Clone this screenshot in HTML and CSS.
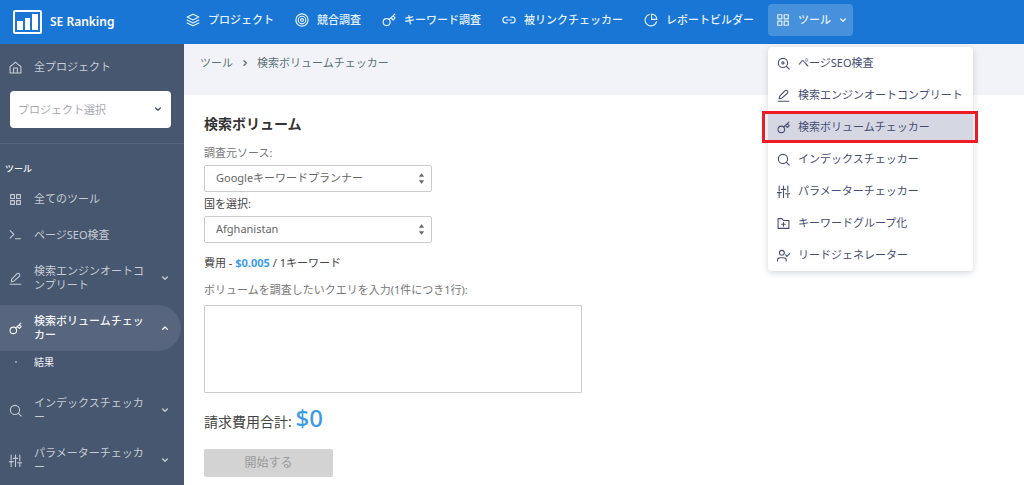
FILE: index.html
```html
<!DOCTYPE html>
<html lang="ja">
<head>
<meta charset="utf-8">
<meta name="viewport" content="width=device-width, initial-scale=1">
<title>検索ボリュームチェッカー - SE Ranking</title>
<link rel="stylesheet" href="styles.css">
</head>
<body>
<svg class="sprite" aria-hidden="true">
  <symbol id="layers" viewBox="0 0 24 24"><path d="M12 2 2 7l10 5 10-5zM2 12l10 5 10-5M2 17l10 5 10-5"/></symbol>
  <symbol id="target" viewBox="0 0 24 24"><circle cx="12" cy="12" r="10.5"/><circle cx="12" cy="12" r="6.5"/><circle cx="12" cy="12" r="2.5"/></symbol>
  <symbol id="key" viewBox="0 0 24 24"><circle cx="8" cy="15.500" r="6"/><path d="M12.500 11 22 2M15.500 8l3.500 4 3.500-3.500L19 5"/></symbol>
  <symbol id="link" viewBox="0 0 24 24"><path d="M9 17H6.500a5 5 0 0 1 0-10H9M15 7h2.500a5 5 0 0 1 0 10H15M8 12h8"/></symbol>
  <symbol id="pie" viewBox="0 0 24 24"><path d="M9 2.500A10 10 0 1 0 21.500 15M13 2v9h9a9 9 0 0 0-9-9z"/></symbol>
  <symbol id="grid" viewBox="0 0 24 24"><path d="M3 3h7v7H3zM14 3h7v7h-7zM3 14h7v7H3zM14 14h7v7h-7z"/></symbol>
  <symbol id="down" viewBox="0 0 24 24"><path d="m5 9 7 7 7-7"/></symbol>
  <symbol id="up" viewBox="0 0 24 24"><path d="m5 16 7-7 7 7"/></symbol>
  <symbol id="right" viewBox="0 0 24 24"><path d="m9 5 7 7-7 7"/></symbol>
  <symbol id="home" viewBox="0 0 24 24"><path d="M2 10q5-3 10-8 5 5 10 8v12H2zM8.500 22v-9h7v9"/></symbol>
  <symbol id="terminal" viewBox="0 0 24 24"><path d="m2 3 7 7-7 7M12 18h9"/></symbol>
  <symbol id="pencil" viewBox="0 0 24 24"><path d="m4 18 1-5L15 3q2-1.500 4 .500t.500 4L9 17zM2 22.500h20"/></symbol>
  <symbol id="search" viewBox="0 0 24 24"><circle cx="11" cy="11" r="8.500"/><path d="m17 17 5.500 5.500"/></symbol>
  <symbol id="search-dot" viewBox="0 0 24 24"><circle cx="11" cy="11" r="8.500"/><circle cx="11" cy="11" r="2"/><path d="m17 17 5.500 5.500"/></symbol>
  <symbol id="sliders" viewBox="0 0 24 24"><path d="M4 2v9M4 15v8M12 2v4M12 10v13M20 2v11M20 17v6M0 14h8M8 8h8M16 16h8"/></symbol>
  <symbol id="folder" viewBox="0 0 24 24"><path d="M2 3h7l3 3.500h10V21H2zM12 10v7M8.500 13.500h7"/></symbol>
  <symbol id="user" viewBox="0 0 24 24"><circle cx="9" cy="7" r="4.500"/><path d="M1 22v-2q0-4 5-4h6q5 0 5 4v2M16 11l2.500 2.500L24 8"/></symbol>
  <symbol id="sort" viewBox="0 0 8 12"><path d="m4 0 3 4H1zM4 12 1 8h6z"/></symbol>
</svg>

<header class="topbar">
  <a class="brand" href="#">
    <svg class="brand-mark" viewBox="0 0 29 24" aria-hidden="true"><rect x="1" y="1" width="27" height="22" rx="1"/><path d="M4 11h6v9H4zM12 8h5v12h-5zM19 4h6v16h-6z"/></svg>
    <span>SE Ranking</span>
  </a>
  <nav class="nav">
    <a href="#"><svg class="icon"><use href="#layers"/></svg>プロジェクト</a>
    <a href="#"><svg class="icon"><use href="#target"/></svg>競合調査</a>
    <a href="#"><svg class="icon"><use href="#key"/></svg>キーワード調査</a>
    <a href="#"><svg class="icon"><use href="#link"/></svg>被リンクチェッカー</a>
    <a href="#"><svg class="icon"><use href="#pie"/></svg>レポートビルダー</a>
    <div class="tools">
      <button class="tools-button" type="button" aria-expanded="true"><svg class="icon"><use href="#grid"/></svg>ツール<svg class="chevron"><use href="#down"/></svg></button>
      <div class="menu">
        <a href="#"><svg class="icon"><use href="#search-dot"/></svg>ページSEO検査</a>
        <a href="#"><svg class="icon"><use href="#pencil"/></svg>検索エンジンオートコンプリート</a>
        <a class="selected" href="#"><svg class="icon"><use href="#key"/></svg>検索ボリュームチェッカー</a>
        <a href="#"><svg class="icon"><use href="#search"/></svg>インデックスチェッカー</a>
        <a href="#"><svg class="icon"><use href="#sliders"/></svg>パラメーターチェッカー</a>
        <a href="#"><svg class="icon"><use href="#folder"/></svg>キーワードグループ化</a>
        <a href="#"><svg class="icon"><use href="#user"/></svg>リードジェネレーター</a>
      </div>
    </div>
  </nav>
</header>

<div class="layout">
  <aside class="sidebar">
    <a class="side-item home" href="#"><svg class="icon"><use href="#home"/></svg><span>全プロジェクト</span></a>
    <div class="project">
      <select aria-label="プロジェクト選択"><option>プロジェクト選択</option></select>
      <svg class="chevron"><use href="#down"/></svg>
    </div>
    <h2 class="side-title">ツール</h2>
    <nav class="side-nav">
      <a class="side-item" href="#"><svg class="icon"><use href="#grid"/></svg><span>全てのツール</span></a>
      <a class="side-item" href="#"><svg class="icon"><use href="#terminal"/></svg><span>ページSEO検査</span></a>
      <a class="side-item tall" href="#"><svg class="icon"><use href="#pencil"/></svg><span>検索エンジンオートコンプリート</span><svg class="chevron"><use href="#down"/></svg></a>
      <a class="side-item tall active" href="#"><svg class="icon"><use href="#key"/></svg><span>検索ボリュームチェッカー</span><svg class="chevron"><use href="#up"/></svg></a>
      <a class="side-sub" href="#"><i class="dot"></i>結果</a>
      <a class="side-item tall" href="#"><svg class="icon"><use href="#search"/></svg><span>インデックスチェッカー</span><svg class="chevron"><use href="#down"/></svg></a>
      <a class="side-item tall" href="#"><svg class="icon"><use href="#sliders"/></svg><span>パラメーターチェッカー</span><svg class="chevron"><use href="#down"/></svg></a>
    </nav>
  </aside>

  <main class="main">
    <div class="crumbs">
      <a href="#">ツール</a>
      <svg class="chevron"><use href="#right"/></svg>
      <span>検索ボリュームチェッカー</span>
    </div>
    <form class="form">
      <h1>検索ボリューム</h1>
      <label class="muted" for="source">調査元ソース:</label>
      <div class="picker">
        <select id="source"><option>Googleキーワードプランナー</option></select>
        <svg class="sort"><use href="#sort"/></svg>
      </div>
      <label for="country">国を選択:</label>
      <div class="picker">
        <select id="country"><option>Afghanistan</option></select>
        <svg class="sort"><use href="#sort"/></svg>
      </div>
      <p class="cost">費用 - <b>$0.005</b> / 1キーワード</p>
      <label class="muted" for="queries">ボリュームを調査したいクエリを入力(1件につき1行):</label>
      <textarea id="queries"></textarea>
      <p class="total">請求費用合計: <span>$0</span></p>
      <button class="start" type="button" disabled>開始する</button>
    </form>
  </main>
</div>
</body>
</html>
```

FILE: styles.css
```css
* {
  box-sizing: border-box;
}

body {
  margin: 0;
  min-height: 100vh;
  display: flex;
  flex-direction: column;
  overflow: hidden;
  background: #fff;
  color: #444;
  font: 11px/14px "Noto Sans", "Noto Sans CJK JP", sans-serif;
}

a {
  color: inherit;
  text-decoration: none;
}

button,
select,
textarea {
  font: inherit;
  color: inherit;
}

h1,
h2,
p {
  margin: 0;
}

svg {
  flex: none;
  fill: none;
  stroke: currentColor;
  stroke-width: 2;
  stroke-linejoin: round;
  stroke-linecap: round;
}

.sprite {
  position: absolute;
  width: 0;
  height: 0;
}

.icon {
  width: 14px;
  height: 14px;
}

.chevron {
  width: 8px;
  height: 8px;
  stroke-width: 4;
}

/* Top bar */

.topbar {
  display: flex;
  align-items: center;
  height: 44px;
  padding: 0 13px;
  background: #1976d4;
  color: #e4f0fc;
}

.brand {
  display: flex;
  align-items: center;
  gap: 8px;
  width: 173px;
  color: #fff;
  font-size: 12px;
  font-weight: 600;
}

.brand-mark {
  width: 29px;
  height: 24px;
}

.brand-mark path {
  fill: #fff;
  stroke: none;
}

.nav {
  display: flex;
  align-items: center;
  gap: 21px;
  height: 38px;
  padding-bottom: 4px;
  font-weight: 500;
  white-space: nowrap;
}

.nav > a {
  display: flex;
  align-items: center;
  gap: 8px;
}

.tools {
  position: relative;
  margin-left: -7px;
}

.tools-button {
  display: flex;
  align-items: center;
  gap: 8px;
  height: 32px;
  padding: 0 6px 0 8px;
  border: 0;
  border-radius: 4px;
  background: #4791dc;
}

.menu {
  position: absolute;
  z-index: 2;
  top: 43px;
  left: 0;
  width: 205px;
  border-radius: 4px;
  background: #fff;
  box-shadow: 0 2px 6px rgba(40, 50, 80, .2);
  color: #454c73;
  font-weight: 400;
}

.menu a {
  display: flex;
  align-items: center;
  gap: 8px;
  height: 32px;
  padding: 0 9px;
}

.menu .icon {
  width: 13px;
  height: 13px;
}

.menu .selected {
  position: relative;
  background: #d5d7e3;
}

.menu .selected::after {
  content: "";
  position: absolute;
  inset: 0 -5px 0 -6px;
  border: 3px solid #ed1c24;
}

/* Page columns */

.layout {
  display: flex;
  flex: 1;
}

.sidebar {
  flex: none;
  width: 184px;
  background: #475770;
  color: #c6ccd5;
}

.side-item {
  display: flex;
  align-items: center;
  min-height: 32px;
  padding: 0 12px 0 9px;
}

.side-item span {
  flex: 1;
  margin-left: 12px;
}

.side-item .icon {
  width: 13px;
  height: 13px;
}

.side-item.tall {
  min-height: 46px;
  margin-right: 3px;
}

.side-item.tall .chevron {
  margin-left: 14px;
}

.side-item.active {
  border-radius: 0 23px 23px 0;
  background: #57667e;
  color: #f2f4f7;
  font-weight: 500;
}

.home {
  margin-top: 7px;
}

.project {
  position: relative;
  margin: 8px 13px 15px 10px;
}

.project select {
  display: block;
  appearance: none;
  width: 100%;
  height: 37px;
  padding: 0 8px;
  border: 0;
  border-radius: 4px;
  background: #fff;
  color: #a8a8b0;
}

.project .chevron {
  position: absolute;
  top: 14px;
  right: 9px;
  color: #44546a;
}

.side-title {
  padding: 18px 5px 7px;
  border-top: 1px solid #586880;
  color: #f0f2f5;
  font-size: 9px;
  font-weight: 500;
}

.side-nav {
  display: flex;
  flex-direction: column;
  gap: 4px;
}

.side-sub {
  display: flex;
  align-items: center;
  gap: 17px;
  margin-bottom: 14px;
  padding-left: 15px;
  color: #f0f2f5;
  font-size: 10px;
}

.dot {
  width: 2px;
  height: 2px;
  background: #8e99a9;
}

/* Content */

.main {
  flex: 1;
}

.crumbs {
  display: flex;
  align-items: center;
  gap: 8px;
  height: 51px;
  padding: 0 16px 13px;
  background: #f2f3f8;
  color: #5c6f76;
}

.form {
  display: flex;
  flex-direction: column;
  align-items: flex-start;
  padding: 19px 20px;
}

.form h1 {
  margin-bottom: 12px;
  color: #333;
  font-size: 14px;
  font-weight: 700;
  line-height: 20px;
}

.form label {
  margin-bottom: 5px;
}

.form .muted {
  color: #777;
}

.picker {
  position: relative;
  width: 228px;
  max-width: 100%;
  margin-bottom: 5px;
}

.picker select {
  display: block;
  appearance: none;
  width: 100%;
  height: 27px;
  padding: 0 11px 2px;
  border: 1px solid #ccc;
  border-radius: 2px;
  background: #fff;
  color: #666;
}

.sort {
  position: absolute;
  top: 8px;
  right: 7px;
  width: 7px;
  height: 11px;
  fill: #666;
  stroke: none;
}

.form .cost {
  margin: 8px 0 13px;
}

.cost b,
.total span {
  color: #3b9be6;
}

.form textarea {
  width: 378px;
  max-width: 100%;
  height: 88px;
  margin-top: 3px;
  border: 1px solid #ccc;
  border-radius: 1px;
  resize: none;
}

.total {
  margin: 10px 0 12px;
  font-size: 14px;
  line-height: 30px;
}

.total span {
  font-size: 24px;
  font-weight: 500;
}

.start {
  width: 129px;
  height: 28px;
  border: 0;
  border-radius: 2px;
  background: #d3d3d3;
  color: #999;
  font-size: 12px;
}
```
